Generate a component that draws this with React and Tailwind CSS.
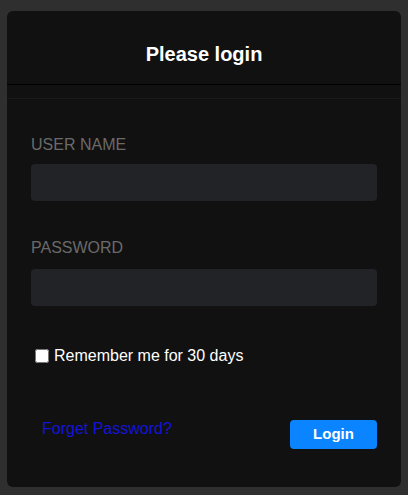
import React from 'react';

export default function App() {
  return (
    <div className="min-h-screen bg-[#2f2f2f] pt-[11px] px-[7px] pb-[8px] font-['Liberation_Sans',Arial,sans-serif]">
      <div className="w-[394px] h-[476px] bg-[#111111] rounded-[6px] flex flex-col">
        {/* Header */}
        <div className="pt-[32px] pb-[18px] border-b border-black text-center">
          <h1 className="text-[20px] leading-[23px] font-bold text-white">Please login</h1>
        </div>
        <div className="h-[14px] border-b border-[#1b1b1b]" />

        {/* Body */}
        <form className="px-[24px] pt-[37px] flex flex-col" onSubmit={(e) => e.preventDefault()}>
          <label className="text-[16px] leading-[18px] text-[#6a6a6a] uppercase">User Name</label>
          <input type="text" className="mt-[10px] h-[37px] w-[346px] rounded-[4px] bg-[#222326] outline-none" />

          <label className="mt-[38px] text-[16px] leading-[18px] text-[#6a6a6a] uppercase">Password</label>
          <input type="password" className="mt-[12px] h-[37px] w-[346px] rounded-[4px] bg-[#222326] outline-none" />

          <label className="mt-[41px] ml-[4px] flex items-center gap-[5px] text-[16px] leading-[18px] text-white">
            <input type="checkbox" className="w-[14px] h-[14px] m-0" />
            Remember me for 30 days
          </label>

          <div className="mt-[55px] flex items-start justify-between">
            <a href="#" className="ml-[11px] text-[16px] leading-[18px] text-[#1414d8]">Forget Password?</a>
            <button type="submit" className="w-[87px] h-[29px] rounded-[4px] bg-[#0a84ff] text-white text-[15px] font-bold">Login</button>
          </div>
        </form>
      </div>
    </div>
  );
}
